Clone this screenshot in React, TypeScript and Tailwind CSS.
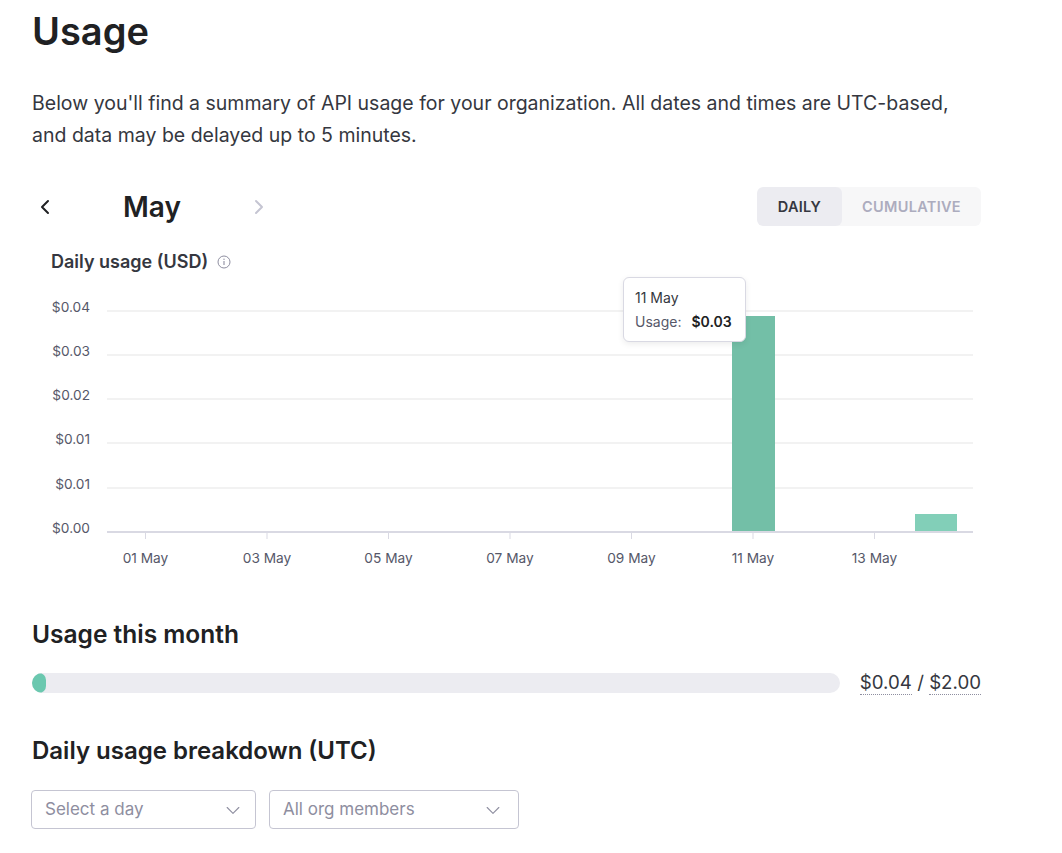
import React from "react";

const F = { fontFamily: "Inter, 'Noto Sans', sans-serif" };

function ChevronLeft({ className }: { className?: string }) {
  return (
    <svg viewBox="0 0 24 24" width="24" height="24" className={className} fill="none" stroke="currentColor" strokeWidth="2" strokeLinecap="round" strokeLinejoin="round">
      <path d="M15 18l-6-6 6-6" />
    </svg>
  );
}
function ChevronRight({ className }: { className?: string }) {
  return (
    <svg viewBox="0 0 24 24" width="24" height="24" className={className} fill="none" stroke="currentColor" strokeWidth="2" strokeLinecap="round" strokeLinejoin="round">
      <path d="M9 18l6-6-6-6" />
    </svg>
  );
}
function ChevronDown() {
  return (
    <svg viewBox="0 0 24 24" width="20" height="20" fill="none" stroke="#8e8ea0" strokeWidth="1.3" strokeLinecap="round" strokeLinejoin="round">
      <path d="M5 9l7 7 7-7" />
    </svg>
  );
}

function Chart() {
  const grid = [19, 63, 107, 151, 196, 240];
  const ylabels = ["$0.04", "$0.03", "$0.02", "$0.01", "$0.01", "$0.00"];
  const days = [1, 3, 5, 7, 9, 11, 13];
  return (
    <div className="relative mt-[18px] h-[285px] w-full">
      <svg width="949" height="285" viewBox="0 0 949 285" className="block">
        {grid.map((y, i) => (
          <line key={i} x1="75" x2="941" y1={y} y2={y} stroke={i === 5 ? "#d9d9e3" : "#e5e5e5"} strokeWidth={i === 5 ? 2 : 1} />
        ))}
        {ylabels.map((t, i) => (
          <text key={i} x="58" y={grid[i] - 3} textAnchor="end" dominantBaseline="middle" fontSize="13.7" fill="#565869" style={F}>
            {t}
          </text>
        ))}
        <rect x="700" y="24" width="43" height="215" fill="#73bfa7" />
        <rect x="883" y="222" width="42" height="17" fill="#82cfb8" />
        {days.map((d) => {
          const x = 113.5 + 60.75 * (d - 1);
          return (
            <g key={d}>
              <line x1={x} x2={x} y1="241" y2="247" stroke="#d9d9e3" strokeWidth="1" />
              <text x={x} y="267" textAnchor="middle" dominantBaseline="middle" fontSize="13.7" fill="#565869" style={F}>
                {String(d).padStart(2, "0")} May
              </text>
            </g>
          );
        })}
      </svg>
      <div className="absolute left-[591px] top-[-15px] w-[123px] h-[65px] rounded-[6px] border border-[#d9d9e3] bg-white shadow-[0_2px_6px_rgba(0,0,0,0.08)] px-[11px] pt-[10px]">
        <div className="text-[14px] leading-[20px] text-[#353740]">11 May</div>
        <div className="mt-[4px] text-[14px] leading-[20px] text-[#565869] flex">
          <span>Usage:</span>
          <span className="ml-[10px] font-semibold text-[#202123]">$0.03</span>
        </div>
      </div>
    </div>
  );
}

export default function App() {
  return (
    <div className="min-h-[853px] w-[1062px] bg-white" style={F}>
      <div className="w-[949px] ml-[32px] pt-[9px]">
        <h1 className="text-[38px] leading-[44px] font-semibold text-[#202123]">Usage</h1>
        <p className="mt-[34px] text-[19.5px] leading-[32px] text-[#353740]">
          Below you'll find a summary of API usage for your organization. All dates and times are UTC-based, and data may be delayed up to 5 minutes.
        </p>

        <div className="mt-[36px] flex items-center justify-between h-[39px]">
          <div className="flex items-center">
            <button className="w-[26px] flex justify-center text-[#202123]">
              <ChevronLeft />
            </button>
            <div className="w-[188px] text-center text-[28px] leading-[36px] font-semibold text-[#202123]">May</div>
            <button className="w-[26px] flex justify-center text-[#c5c5d2]">
              <ChevronRight />
            </button>
          </div>
          <div className="flex h-[39px] rounded-[6px] overflow-hidden bg-[#f7f7f8] text-[14.5px] font-semibold tracking-[0.3px]">
            <div className="w-[85px] flex items-center justify-center bg-[#ececf1] text-[#353740] rounded-[6px]">DAILY</div>
            <div className="w-[139px] flex items-center justify-center text-[#acacbe]">CUMULATIVE</div>
          </div>
        </div>

        <div className="mt-[24px] ml-[19px] flex items-center h-[24px]">
          <span className="text-[18px] leading-[24px] font-semibold text-[#353740]">Daily usage (USD)</span>
          <svg width="14" height="14" viewBox="0 0 14 14" className="ml-[9px]" fill="none">
            <circle cx="7" cy="7" r="6" stroke="#8e8ea0" strokeWidth="1" />
            <line x1="7" y1="6" x2="7" y2="10" stroke="#8e8ea0" strokeWidth="1.1" />
            <circle cx="7" cy="4.2" r="0.7" fill="#8e8ea0" />
          </svg>
        </div>

        <Chart />

        <h2 className="mt-[41px] text-[24.5px] leading-[32px] font-semibold text-[#202123]">Usage this month</h2>
        <div className="mt-[19px] flex items-center h-[28px]">
          <div className="flex-1 h-[20px] rounded-full bg-[#ececf1] overflow-hidden">
            <div className="h-[20px] w-[14px] rounded-full bg-[#6bc8af]" />
          </div>
          <div className="ml-[20px] text-[18.7px] leading-[28px] text-[#353740] whitespace-nowrap">
            <span className="border-b border-dotted border-[#8e8ea0]">$0.04</span>
            <span> / </span>
            <span className="border-b border-dotted border-[#8e8ea0]">$2.00</span>
          </div>
        </div>

        <h2 className="mt-[38px] text-[24px] leading-[32px] font-semibold text-[#202123]">Daily usage breakdown (UTC)</h2>
        <div className="mt-[23px] flex gap-[13px]">
          <div className="w-[225px] h-[39px] -ml-[1px] rounded-[4px] border border-[#c5c5d2] flex items-center justify-between pl-[13px] pr-[12px]">
            <span className="text-[17px] text-[#8e8ea0]">Select a day</span>
            <ChevronDown />
          </div>
          <div className="w-[250px] h-[39px] rounded-[4px] border border-[#c5c5d2] flex items-center justify-between pl-[13px] pr-[15px]">
            <span className="text-[17px] text-[#8e8ea0]">All org members</span>
            <ChevronDown />
          </div>
        </div>
      </div>
    </div>
  );
}
